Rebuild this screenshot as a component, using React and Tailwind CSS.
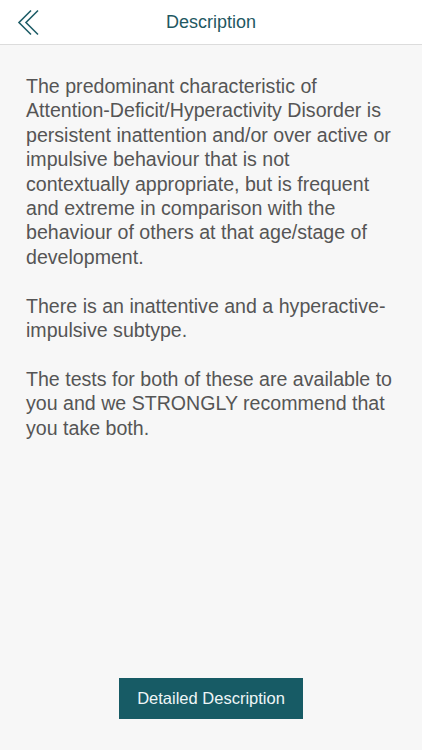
const paragraphs = [
  [
    "The predominant characteristic of",
    "Attention-Deficit/Hyperactivity Disorder is",
    "persistent inattention and/or over active or",
    "impulsive behaviour that is not",
    "contextually appropriate, but is frequent",
    "and extreme in comparison with the",
    "behaviour of others at that age/stage of",
    "development.",
  ],
  ["There is an inattentive and a hyperactive-", "impulsive subtype."],
  [
    "The tests for both of these are available to",
    "you and we STRONGLY recommend that",
    "you take both.",
  ],
];

const App = () => {
  return (
    <div className="w-[422px] h-[750px] flex flex-col bg-[#f7f7f7] font-['Liberation_Sans',Arial,sans-serif]">
      <div className="h-[45px] shrink-0 bg-white border-b border-[#dcdcdc] relative flex items-center justify-center">
        <button className="absolute left-[17px] top-[9px] w-[24px] h-[28px]">
          <svg viewBox="0 0 24 28" className="w-[24px] h-[28px]" fill="none" stroke="#1f5e68" strokeWidth="1.6">
            <path d="M14 1.5 L2 13.5 L14 25.5" />
            <path d="M21 1.5 L9 13.5 L21 25.5" />
          </svg>
        </button>
        <span className="text-[18px] text-[#1f5862]">Description</span>
      </div>
      <div className="flex-1 flex flex-col pt-[29px] pb-[31px]">
        <div className="px-[26px] text-[19.6px] leading-[24.4px] text-[#555555] space-y-[24.4px] whitespace-nowrap">
          {paragraphs.map((lines, i) => (
            <p key={i}>
              {lines.map((l, j) => (
                <span key={j} className="block">
                  {l}
                </span>
              ))}
            </p>
          ))}
        </div>
        <div className="mt-auto flex justify-center">
          <button className="w-[184px] h-[41px] bg-[#175b65] text-[#eef6f7] text-[16.5px]">
            Detailed Description
          </button>
        </div>
      </div>
    </div>
  );
};

export default App;
